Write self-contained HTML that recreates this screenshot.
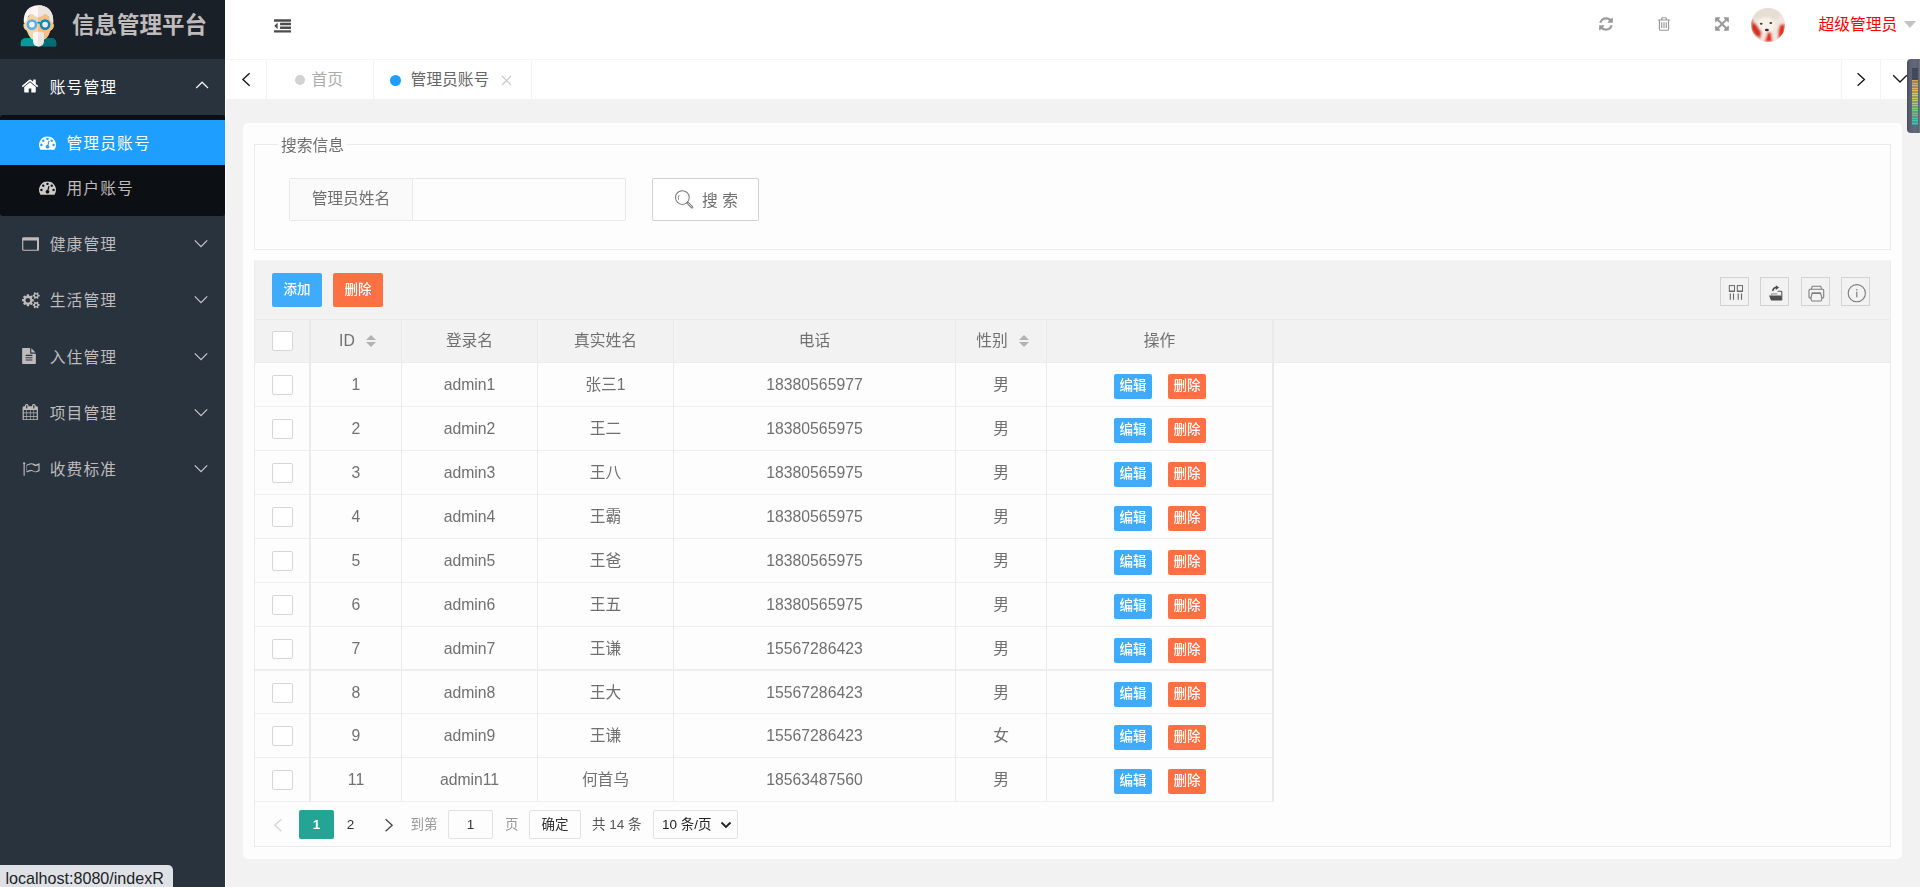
<!DOCTYPE html>
<html lang="zh-CN">
<head>
<meta charset="utf-8">
<title>信息管理平台</title>
<style>
*{box-sizing:border-box;margin:0;padding:0}
html,body{width:1920px;height:887px;overflow:hidden}
body{position:relative;background:#f2f2f2;font-family:"Liberation Sans","Noto Sans CJK SC",sans-serif;font-size:15.75px;color:#666}
svg{display:block}
/* ---------- sidebar ---------- */
#wl{position:absolute;left:225px;top:0;width:1px;height:887px;background:#fff}
#hl{position:absolute;left:226px;top:59px;width:1694px;height:1px;background:#f5f5f5}
#side{position:absolute;left:0;top:0;width:225px;height:887px;background:#28333e}
#logo{position:absolute;left:0;top:0;width:225px;height:58.5px;background:#192027}
#logo .t{position:absolute;left:72px;top:3px;height:46px;line-height:46px;font-size:22.5px;font-weight:bold;color:rgb(191,187,187);white-space:nowrap}
#logo svg{position:absolute}
.mi{position:absolute;left:0;width:225px;height:56.25px;line-height:56.25px;color:rgb(191,187,187);font-size:15.75px;letter-spacing:1.125px;white-space:nowrap}
.mi .tx{position:absolute;left:49.7px;top:1px}
.mi svg.ic{position:absolute}
.mi svg.ar{position:absolute;left:194px;top:23px}
#sub{position:absolute;left:0;top:115px;width:225px;height:101px;background:#0c0f13;border-radius:3px}
.si{position:absolute;left:0;width:225px;height:45px;line-height:45px;color:rgb(191,187,187);font-size:15.75px;letter-spacing:1.125px;white-space:nowrap}
.si .tx{position:absolute;left:66.5px;top:1px}
.si svg{position:absolute;left:39.1px;top:13.6px}
.si.on{background:#1e9fff;color:#fff}
/* ---------- header ---------- */
#hd{position:absolute;left:225px;top:0;width:1695px;height:59px;background:#fff}
#hd svg{position:absolute}
#hd .av{position:absolute;left:1526px;top:7.5px;width:34px;height:34px;border-radius:50%;overflow:hidden}
#hd .un{position:absolute;left:1593.5px;top:0;height:50px;line-height:50px;color:#f00;font-size:15.75px;white-space:nowrap}
#hd .tri{position:absolute;left:1679px;top:21px;width:0;height:0;border:6.5px solid transparent;border-top:7px solid #c2c2c2}
#tabs{position:absolute;left:226px;top:60px;width:1694px;height:39px;background:#fff}
#tabs .dv{position:absolute;top:0;width:1px;height:39px;background:#f3f3f3}
#tabs .dot{position:absolute;border-radius:50%}
#tabs .tt{position:absolute;top:0;height:39px;line-height:39px;white-space:nowrap;font-size:15.75px}
#tabs svg{position:absolute}
#meter{position:absolute;left:1907px;top:59px;width:13px;height:73.5px;background:linear-gradient(90deg,#474c5b 0,#5a6071 22%,#636979 60%,#5c6273 90%,#7c8190 100%);border-radius:4px 0 0 4px;overflow:hidden}
#meter i{position:absolute;left:5px;width:5.5px;height:1.3px}
/* ---------- content ---------- */
#fr{position:absolute;left:0;top:0;width:1920px;height:887px;will-change:transform}
#card{position:absolute;left:243px;top:123px;width:1659px;height:736px;background:#fdfdfd;border-radius:5px}
#fs{position:absolute;left:254px;top:144px;width:1637px;height:106px;border:1px solid #ebebeb}
#fs .lg{position:absolute;left:23px;top:-10px;height:22px;line-height:22px;padding:0 3px;background:#fdfdfd;font-size:15.75px;color:#707070;white-space:nowrap}
#ig{position:absolute;left:289px;top:178px;width:337px;height:43px;border:1px solid #e9e9e9;border-radius:2px}
#ig .lb{position:absolute;left:0;top:0;width:123px;height:41px;line-height:40px;background:#fafafa;border-right:1px solid #e9e9e9;text-align:center;white-space:nowrap;color:#707070}
#sbtn{position:absolute;left:652px;top:178px;width:107px;height:43px;border:1px solid #d0d0d0;border-radius:2px;background:#fff;color:#707070;line-height:41px;white-space:nowrap}
#sbtn svg{position:absolute;left:20.7px;top:10.3px}
#sbtn span{position:absolute;left:49px;top:1px}
#tb{position:absolute;left:254px;top:260px;width:1637px;height:587px;border:1px solid #ebebeb;border-top-color:#f6f6f6;background:#fdfdfd}
#tool{position:absolute;left:0;top:0;width:1635px;height:59px;background:#f2f2f2;border-bottom:1px solid #ebebeb}
#tool .b1,#tool .b2{position:absolute;top:12px;height:34px;line-height:33px;font-weight:500;width:50px;text-align:center;color:#fff;font-size:13.5px;border-radius:2px;white-space:nowrap}
#tool .b1{left:17px;background:#3eabfd}
#tool .b2{left:78px;background:#fd7044}
#tool .tk{position:absolute;top:16px;width:29px;height:29px;border:1px solid #d2d2d2}
#tool .tk svg{position:absolute;left:-1px;top:-0.5px}
#th{position:absolute;left:0;top:59px;width:1635px;height:43px;background:#f2f2f2;border-bottom:1px solid #ececec}
.hc{position:absolute;top:59px;height:42px;line-height:42px;text-align:center;color:#707070;white-space:nowrap}
.st{display:inline-block;position:relative;width:11.6px;height:14px;margin-left:11.5px;vertical-align:-2.7px}
.st b{position:absolute;left:0;width:0;height:0;border:5.8px solid transparent}
.st .u{top:-4.6px;border-bottom-color:#b2b2b2}
.st .d{top:7.5px;border-top-color:#b2b2b2}
.cb{position:absolute;width:21px;height:20px;border:1px solid #d6d6d6;border-radius:2px;background:#fff}
.tr{position:absolute;left:0;width:1017px;border-bottom:1px solid #efefef}
.tc{position:absolute;top:0;height:43px;line-height:43px;text-align:center;color:#707070;white-space:nowrap}
.e1,.e2{position:absolute;top:11px;height:25px;line-height:24px;font-weight:500;width:38px;text-align:center;color:#fff;font-size:13.5px;border-radius:2px;white-space:nowrap}
.e1{left:859px;background:#3eabfd}
.e2{left:913px;background:#fd7044}
.vl{position:absolute;top:59px;height:482px;background:#eaeaea}
#pg{position:absolute;left:0;top:541px;width:1635px;height:44px}
#pg>*{position:absolute}
#pg span{font-size:13.5px;white-space:nowrap;top:8px;height:29px;line-height:29px}
#pg .pv{left:18.3px;top:15.5px}
#pg .nx{left:128.6px;top:15.5px}
#pg .cur{left:44px;width:35px;background:#24a494;color:#fff;text-align:center;border-radius:2px;font-weight:bold}
#pg .p2{left:80px;width:31px;text-align:center;color:#333}
#pg .t1{left:155.5px;color:#999}
#pg .pin{left:193px;width:45px;border:1px solid #e2e2e2;border-radius:2px;text-align:center;color:#333;line-height:27px}
#pg .t2{left:250px;color:#999}
#pg .ok{left:274px;width:52px;border:1px solid #e2e2e2;border-radius:2px;text-align:center;color:#333;line-height:27px}
#pg .t3{left:337px;color:#555}
#pg .sel{left:398px;width:85px;border:1px solid #e2e2e2;border-radius:2px;color:#222;line-height:27px;padding-left:8px}
#pg .sel svg{position:absolute;left:66px;top:10px}
#status{position:absolute;left:0;top:865px;width:173px;height:22px;background:#dee1e6;border-top-right-radius:5px;color:#202124;font-size:16.1px;line-height:27.5px;padding-left:5.5px;white-space:nowrap;font-family:"Liberation Sans",sans-serif}
.hc.so{padding-left:5px}
</style>
</head>
<body>
<div id="side">
  <div id="logo">
    <svg style="left:14px;top:0" width="50" height="52" viewBox="14 0 50 52">
<clipPath id="rh"><rect x="38" y="0" width="30" height="52"/></clipPath>
<g id="lg1">
<path d="M20.7 46.3V43Q20.7 38.1 27 38.1H50Q56.2 38.1 56.2 43V46.3Z" fill="#009a9a"/>
<path d="M24.6 21.5V23.2Q23.3 23.4 23.4 25.6Q23.6 29.4 26.6 30.4L28.6 35Q31 39.6 35 40.6H42Q46 39.6 48.6 35L50.4 30.4Q53.6 29.4 53.7 25.6Q53.8 23.4 52.4 23.2V21.5L45 12H32Z" fill="#f3d5a6"/>
<path d="M23.9 23.4C22.6 11.5 29.5 5.3 38.4 5.3C47.5 5.3 54.4 11.5 53.1 23.4L50.4 21L48.6 16L45.1 13.7Q38.4 20.6 31.7 13.7L28.4 16L26.6 21Z" fill="#fef6f4"/>
<path d="M33 33.6Q33 31.8 36 31.8H41Q44 31.8 44 33.6V41Q44 46.4 38.5 46.4Q33 46.4 33 41Z" fill="#fef6f4"/>
<path d="M36.2 23.6Q38.5 21.4 40.8 23.6" fill="none" stroke="#5dade9" stroke-width="1.6"/>
<circle cx="31.9" cy="24.6" r="4.1" fill="#ecf5ff" stroke="#5dade9" stroke-width="2.5"/>
</g>
<g clip-path="url(#rh)">
<path d="M20.7 46.3V43Q20.7 38.1 27 38.1H50Q56.2 38.1 56.2 43V46.3Z" fill="#006c73"/>
<path d="M24.6 21.5V23.2Q23.3 23.4 23.4 25.6Q23.6 29.4 26.6 30.4L28.6 35Q31 39.6 35 40.6H42Q46 39.6 48.6 35L50.4 30.4Q53.6 29.4 53.7 25.6Q53.8 23.4 52.4 23.2V21.5L45 12H32Z" fill="#f5c083"/>
<path d="M23.9 23.4C22.6 11.5 29.5 5.3 38.4 5.3C47.5 5.3 54.4 11.5 53.1 23.4L50.4 21L48.6 16L45.1 13.7Q38.4 20.6 31.7 13.7L28.4 16L26.6 21Z" fill="#ece4e1"/>
<path d="M33 33.6Q33 31.8 36 31.8H41Q44 31.8 44 33.6V41Q44 46.4 38.5 46.4Q33 46.4 33 41Z" fill="#ece4e1"/>
<path d="M36.2 23.6Q38.5 21.4 40.8 23.6" fill="none" stroke="#0f8aae" stroke-width="1.6"/>
<circle cx="45.1" cy="24.6" r="4.1" fill="#dfefff" stroke="#0f8aae" stroke-width="2.5"/>
</g>
</svg>
    <span class="t">信息管理平台</span>
  </div>
  <div class="mi" style="top:58.5px;color:#fff">
    <svg class="ic" style="left:21px;top:76.5px;margin-top:-58.5px" width="18" height="18" viewBox="0 0 1792 1792"><path fill="#fff" d="M1472 992v480q0 26-19 45t-45 19h-384v-384h-256v384h-384q-26 0-45-19t-19-45v-480q0-1 .5-3t.5-3l575-474 575 474q1 2 1 6zm223-69l-62 74q-8 9-21 11h-3q-13 0-21-7l-692-577-692 577q-12 8-24 7-13-2-21-11l-62-74q-8-10-7-23.500t11-21.500l719-599q32-26 76-26t76 26l244 204v-195q0-14 9-23t23-9h192q14 0 23 9t9 23v408l219 182q10 8 11 21.500t-7 23.500z"/></svg>
    <span class="tx">账号管理</span>
    <svg class="ar" style="left:194px;top:21.5px" width="16" height="10" viewBox="0 0 16 10"><path d="M2.2 8 L8.1 2.2 L14 8" fill="none" stroke="#f0f0f0" stroke-width="1.25"/></svg>
  </div>
  <div id="sub">
    <div class="si on" style="top:5px">
      <svg width="17" height="17" viewBox="0 0 1792 1792"><path fill="#fff" d="M384 1152q0-53-37.500-90.500t-90.500-37.500-90.500 37.500-37.500 90.500 37.500 90.500 90.500 37.500 90.500-37.500 37.500-90.500zm192-448q0-53-37.500-90.500t-90.500-37.500-90.500 37.500-37.500 90.500 37.500 90.500 90.500 37.500 90.500-37.500 37.500-90.500zm428 481l101-382q6-26-7.500-48.500t-38.500-29.500-48 6.500-30 39.500l-101 382q-60 5-107 43.500t-63 98.500q-20 77 20 146t117 89 146-20 89-117q16-60-6-117t-72-91zm660-33q0-53-37.500-90.500t-90.500-37.500-90.500 37.500-37.500 90.500 37.500 90.500 90.500 37.500 90.500-37.500 37.500-90.500zm-640-640q0-53-37.500-90.500t-90.500-37.500-90.500 37.500-37.500 90.500 37.500 90.500 90.500 37.500 90.500-37.500 37.500-90.500zm448 192q0-53-37.500-90.500t-90.500-37.500-90.500 37.500-37.500 90.500 37.500 90.500 90.500 37.500 90.500-37.500 37.500-90.500zm320 448q0 261-141 483-19 29-54 29h-1402q-35 0-54-29-141-221-141-483 0-182 71-348t191-286 286-191 348-71 348 71 286 191 191 286 71 348z"/></svg>
      <span class="tx">管理员账号</span>
    </div>
    <div class="si" style="top:50px">
      <svg width="17" height="17" viewBox="0 0 1792 1792"><path fill="#cdc9c9" d="M384 1152q0-53-37.500-90.500t-90.500-37.500-90.500 37.500-37.500 90.500 37.500 90.500 90.500 37.500 90.500-37.500 37.500-90.500zm192-448q0-53-37.500-90.500t-90.500-37.500-90.500 37.500-37.500 90.500 37.500 90.500 90.500 37.500 90.500-37.500 37.500-90.500zm428 481l101-382q6-26-7.500-48.500t-38.500-29.500-48 6.500-30 39.500l-101 382q-60 5-107 43.500t-63 98.500q-20 77 20 146t117 89 146-20 89-117q16-60-6-117t-72-91zm660-33q0-53-37.500-90.500t-90.500-37.500-90.500 37.500-37.500 90.500 37.500 90.500 90.500 37.500 90.500-37.500 37.500-90.500zm-640-640q0-53-37.500-90.500t-90.500-37.500-90.500 37.500-37.500 90.500 37.500 90.500 90.500 37.500 90.500-37.500 37.500-90.500zm448 192q0-53-37.500-90.500t-90.500-37.500-90.500 37.500-37.500 90.500 37.500 90.500 90.500 37.500 90.500-37.500 37.500-90.500zm320 448q0 261-141 483-19 29-54 29h-1402q-35 0-54-29-141-221-141-483 0-182 71-348t191-286 286-191 348-71 348 71 286 191 191 286 71 348z"/></svg>
      <span class="tx">用户账号</span>
    </div>
  </div>
  <div class="mi" style="top:216px">
    <svg class="ic" style="left:21px;top:19.9px" width="18.29" height="16" viewBox="0 0 2048 1792"><path fill="#bfbbbb" d="M256 1536h1536v-1024h-1536v1024zm1792-1248v1216q0 66-47 113t-113 47h-1600q-66 0-113-47t-47-113v-1216q0-66 47-113t113-47h1600q66 0 113 47t47 113z"/></svg>
    <span class="tx">健康管理</span>
    <svg class="ar" style="left:192.6px;top:22px" width="16" height="10" viewBox="0 0 16 10"><path d="M1.8 2.4 L8 8.6 L14.2 2.4" fill="none" stroke="#c8c5c5" stroke-width="1.25"/></svg>
  </div>
  <div class="mi" style="top:272.25px">
    <svg class="ic" style="left:22.1px;top:19.8px" width="17.68" height="16.5" viewBox="0 0 1920 1792"><path fill="#bfbbbb" d="M896 896q0-106-75-181t-181-75-181 75-75 181 75 181 181 75 181-75 75-181zm768 512q0-52-38-90t-90-38-90 38-38 90q0 53 37.500 90.500t90.500 37.500 90.500-37.500 37.500-90.500zm0-1024q0-52-38-90t-90-38-90 38-38 90q0 53 37.500 90.500t90.500 37.500 90.500-37.500 37.500-90.500zm-384 421v185q0 10-7 19.500t-16 10.500l-155 24q-11 35-32 76 34 48 90 115 7 11 7 20 0 12-7 19-23 30-82.500 89.500t-78.500 59.500q-11 0-21-7l-115-90q-37 19-77 31-11 108-23 155-7 24-30 24h-186q-11 0-20-7.500t-10-17.500l-23-153q-34-10-75-31l-118 89q-7 7-20 7-11 0-21-8-144-133-144-160 0-9 7-19 10-14 41-53t47-61q-23-44-35-82l-152-24q-10-1-17-9.500t-7-19.500v-185q0-10 7-19.500t16-10.500l155-24q11-35 32-76-34-48-90-115-7-11-7-20 0-12 7-20 22-30 82-89t79-59q11 0 21 7l115 90q34-18 77-32 11-108 23-154 7-24 30-24h186q11 0 20 7.500t10 17.500l23 153q34 10 75 31l118-89q8-7 20-7 11 0 21 8 144 133 144 160 0 8-7 19-12 16-42 54t-45 60q23 48 34 82l152 23q10 2 17 10.500t7 19.500zm640 533v140q0 16-149 31-12 27-30 52 51 113 51 138 0 4-4 7-122 71-124 71-8 0-46-47t-52-68q-20 2-30 2t-30-2q-14 21-52 68t-46 47q-2 0-124-71-4-3-4-7 0-25 51-138-18-25-30-52-149-15-149-31v-140q0-16 149-31 13-29 30-52-51-113-51-138 0-4 4-7 4-2 35-20t59-34 30-16q8 0 46 46.500t52 67.500q20-2 30-2t30 2q51-71 92-112l6-2q4 0 124 70 4 3 4 7 0 25-51 138 17 23 30 52 149 15 149 31zm0-1024v140q0 16-149 31-12 27-30 52 51 113 51 138 0 4-4 7-122 71-124 71-8 0-46-47t-52-68q-20 2-30 2t-30-2q-14 21-52 68t-46 47q-2 0-124-71-4-3-4-7 0-25 51-138-18-25-30-52-149-15-149-31v-140q0-16 149-31 13-29 30-52-51-113-51-138 0-4 4-7 4-2 35-20t59-34 30-16q8 0 46 46.500t52 67.500q20-2 30-2t30 2q51-71 92-112l6-2q4 0 124 70 4 3 4 7 0 25-51 138 17 23 30 52 149 15 149 31z"/></svg>
    <span class="tx">生活管理</span>
    <svg class="ar" style="left:192.6px;top:22px" width="16" height="10" viewBox="0 0 16 10"><path d="M1.8 2.4 L8 8.6 L14.2 2.4" fill="none" stroke="#c8c5c5" stroke-width="1.25"/></svg>
  </div>
  <div class="mi" style="top:328.5px">
    <svg class="ic" style="left:21px;top:19.8px" width="16" height="16" viewBox="0 0 1792 1792"><path fill="#bfbbbb" d="M1596 476q14 14 28 36h-472v-472q22 14 36 28zm-476 164h544v1056q0 40-28 68t-68 28h-1344q-40 0-68-28t-28-68v-1600q0-40 28-68t68-28h800v544q0 40 28 68t68 28zm160 736v-64q0-14-9-23t-23-9h-704q-14 0-23 9t-9 23v64q0 14 9 23t23 9h704q14 0 23-9t9-23zm0-256v-64q0-14-9-23t-23-9h-704q-14 0-23 9t-9 23v64q0 14 9 23t23 9h704q14 0 23-9t9-23zm0-256v-64q0-14-9-23t-23-9h-704q-14 0-23 9t-9 23v64q0 14 9 23t23 9h704q14 0 23-9t9-23z"/></svg>
    <span class="tx">入住管理</span>
    <svg class="ar" style="left:192.6px;top:22px" width="16" height="10" viewBox="0 0 16 10"><path d="M1.8 2.4 L8 8.6 L14.2 2.4" fill="none" stroke="#c8c5c5" stroke-width="1.25"/></svg>
  </div>
  <div class="mi" style="top:384.75px">
    <svg class="ic" style="left:21.5px;top:19.15px" width="16.5" height="16.5" viewBox="0 0 1792 1792"><path fill="#bfbbbb" d="M192 1664h288v-288h-288v288zm352 0h320v-288h-320v288zm-352-352h288v-320h-288v320zm352 0h320v-320h-320v320zm-352-384h288v-288h-288v288zm736 736h320v-288h-320v288zm-384-736h320v-288h-320v288zm768 736h288v-288h-288v288zm-384-352h320v-320h-320v320zm-352-864v-288q0-13-9.500-22.500t-22.500-9.500h-64q-13 0-22.500 9.500t-9.500 22.500v288q0 13 9.500 22.500t22.500 9.500h64q13 0 22.500-9.500t9.500-22.500zm736 864h288v-320h-288v320zm-384-384h320v-288h-320v288zm384 0h288v-288h-288v288zm32-480v-288q0-13-9.500-22.500t-22.500-9.500h-64q-13 0-22.500 9.500t-9.500 22.500v288q0 13 9.500 22.500t22.500 9.500h64q13 0 22.500-9.500t9.500-22.500zm384-64v1280q0 52-38 90t-90 38h-1408q-52 0-90-38t-38-90v-1280q0-52 38-90t90-38h128v-96q0-66 47-113t113-47h64q66 0 113 47t47 113v96h384v-96q0-66 47-113t113-47h64q66 0 113 47t47 113v96h128q52 0 90 38t38 90z"/></svg>
    <span class="tx">项目管理</span>
    <svg class="ar" style="left:192.6px;top:22px" width="16" height="10" viewBox="0 0 16 10"><path d="M1.8 2.4 L8 8.6 L14.2 2.4" fill="none" stroke="#c8c5c5" stroke-width="1.25"/></svg>
  </div>
  <div class="mi" style="top:441px">
    <svg class="ic" style="left:23.1px;top:19.96px" width="16.57" height="16" viewBox="0 0 1856 1792"><path fill="#bfbbbb" d="M1728 1099v-622q-165 89-299 89-80 0-141.500-31.500t-115.500-70.500-114-70.500-143-31.500q-221 0-481 183v597q237-146 439-146 58 0 113 16.500t91 36.500 84 49q20 13 33 20.500t42 22.500 56 21 61 6q58 0 135-28t133.500-59.500 106.500-61.500zm-1472-843q0 35-17.500 64t-46.500 46v1266q0 14-9 23t-23 9h-64q-14 0-23-9t-9-23v-1266q-29-17-46.500-46t-17.500-64q0-53 37.500-90.500t90.500-37.500 90.500 37.500 37.500 90.500zm1600 64v763q0 39-35 57-10 5-17 9-218 116-369 116-88 0-158-35l-28-14q-64-33-99-48t-91-29-114-14q-102 0-235.500 44t-228.500 102q-15 9-33 9-16 0-32-8-32-19-32-56v-742q0-35 31-55 35-21 78.500-42.500t114-52 152.500-49.500 155-19q112 0 209 31t209 86q38 19 89 19 122 0 310-112 22-12 31-17 31-16 62 2 31 20 31 55z"/></svg>
    <span class="tx">收费标准</span>
    <svg class="ar" style="left:192.6px;top:22px" width="16" height="10" viewBox="0 0 16 10"><path d="M1.8 2.4 L8 8.6 L14.2 2.4" fill="none" stroke="#c8c5c5" stroke-width="1.25"/></svg>
  </div>
</div>
<div id="wl"></div><div id="hl"></div>
<div id="hd">
  <svg style="left:49px;top:17.6px" width="17" height="17" viewBox="0 0 1792 1792"><path fill="#4d4d4d" d="M384 544v576q0 13-9.500 22.500t-22.500 9.500q-14 0-23-9l-288-288q-9-9-9-23t9-23l288-288q9-9 23-9 13 0 22.500 9.500t9.500 22.500zm1408 768v192q0 13-9.500 22.500t-22.500 9.500h-1728q-13 0-22.500-9.500t-9.500-22.500v-192q0-13 9.500-22.500t22.500-9.500h1728q13 0 22.500 9.500t9.500 22.500zm0-384v192q0 13-9.500 22.500t-22.500 9.500h-1088q-13 0-22.500-9.500t-9.500-22.500v-192q0-13 9.500-22.500t22.500-9.500h1088q13 0 22.500 9.500t9.500 22.500zm0-384v192q0 13-9.500 22.500t-22.500 9.500h-1088q-13 0-22.500-9.500t-9.500-22.500v-192q0-13 9.500-22.500t22.500-9.500h1088q13 0 22.500 9.500t9.500 22.500zm0-384v192q0 13-9.500 22.500t-22.500 9.500h-1728q-13 0-22.500-9.500t-9.500-22.500v-192q0-13 9.500-22.500t22.500-9.500h1728q13 0 22.500 9.500t9.500 22.500z"/></svg>
  <svg style="left:1373.2px;top:16px" width="16" height="16" viewBox="0 0 1792 1792"><path fill="#999" d="M1639 1056q0 5-1 7-64 268-268 434.500t-478 166.500q-146 0-282.500-55t-243.500-157l-129 129q-19 19-45 19t-45-19-19-45v-448q0-26 19-45t45-19h448q26 0 45 19t19 45-19 45l-137 137q71 66 161 102t187 36q134 0 250-65t186-179q11-17 53-117 8-23 30-23h192q13 0 22.500 9.500t9.500 22.500zm25-800v448q0 26-19 45t-45 19h-448q-26 0-45-19t-19-45 19-45l138-138q-148-137-349-137-134 0-250 65t-186 179q-11 17-53 117-8 23-30 23h-199q-13 0-22.500-9.500t-9.500-22.500v-7q65-268 270-434.500t480-166.500q146 0 284 55.500t245 156.500l130-129q19-19 45-19t45 19 19 45z"/></svg>
  <svg style="left:1431.4px;top:16.1px" width="16" height="16" viewBox="0 0 1792 1792"><path fill="#999" d="M704 736v576q0 14-9 23t-23 9h-64q-14 0-23-9t-9-23v-576q0-14 9-23t23-9h64q14 0 23 9t9 23zm256 0v576q0 14-9 23t-23 9h-64q-14 0-23-9t-9-23v-576q0-14 9-23t23-9h64q14 0 23 9t9 23zm256 0v576q0 14-9 23t-23 9h-64q-14 0-23-9t-9-23v-576q0-14 9-23t23-9h64q14 0 23 9t9 23zm128 724v-948h-896v948q0 22 7 40.500t14.500 27 10.500 8.500h832q3 0 10.500-8.500t14.500-27 7-40.500zm-672-1076h448l-48-117q-7-9-17-11h-317q-10 2-17 11zm928 32v64q0 14-9 23t-23 9h-96v948q0 83-47 143.500t-113 60.500h-832q-66 0-113-58.500t-47-141.500v-952h-96q-14 0-23-9t-9-23v-64q0-14 9-23t23-9h309l70-167q15-37 54-63t79-26h320q40 0 79 26t54 63l70 167h309q14 0 23 9t9 23z"/></svg>
  <svg style="left:1489px;top:16.1px" width="16" height="16" viewBox="0 0 1792 1792"><path fill="#999" d="M1411 541l-355 355 355 355 144-144q29-31 70-14 39 17 39 59v448q0 26-19 45t-45 19h-448q-42 0-59-40-17-39 14-69l144-144-355-355-355 355 144 144q31 30 14 69-17 40-59 40h-448q-26 0-45-19t-19-45v-448q0-42 40-59 39-17 69 14l144 144 355-355-355-355-144 144q-19 19-45 19-12 0-24-5-40-17-40-59v-448q0-26 19-45t45-19h448q42 0 59 40 17 39-14 69l-144 144 355 355 355-355-144-144q-31-30-14-69 17-40 59-40h448q26 0 45 19t19 45v448q0 42-39 59-13 5-25 5-26 0-45-19z"/></svg>
  <div class="av"><svg width="34" height="34" viewBox="0 0 34 34"><filter id="bl" x="-10%" y="-10%" width="120%" height="120%"><feGaussianBlur stdDeviation="0.8"/></filter><filter id="bl2" x="-30%" y="-30%" width="160%" height="160%"><feGaussianBlur stdDeviation="0.4"/></filter><rect width="34" height="34" fill="#efe7de"/><g filter="url(#bl)"><rect x="-3" y="-3" width="40" height="40" fill="#efe7de"/>
<ellipse cx="16" cy="6" rx="14" ry="7" fill="#e6ded4"/>
<ellipse cx="15" cy="17" rx="9" ry="8" fill="#f6f1ea"/>
<path d="M0 10L2.2 12L3 16L0 19Z" fill="#c27a2c"/>
<path d="M0.5 15.5L4.6 15.2L10.6 24.2L9.4 30.5L3.5 27L0 21Z" fill="#d2301f"/>
<path d="M29 16.8L34 15.8V27L26.8 31L27.4 22Z" fill="#e23322"/>
<path d="M13.5 34L16.8 24.2L20 24.6L21.5 34Z" fill="#e8341f"/>
<path d="M17.6 24.5L19.2 24.8L19 30L17.8 30Z" fill="#c4261c"/>
</g><g filter="url(#bl2)"><ellipse cx="10.2" cy="15.7" rx="1.4" ry="1" fill="#4a3a2e"/>
<ellipse cx="19.8" cy="14.9" rx="1.4" ry="1" fill="#4a3a2e"/>
<ellipse cx="15.9" cy="22" rx="2" ry="1.3" fill="#35272a"/>
</g></svg></div>
  <span class="un">超级管理员</span>
  <i class="tri"></i>
</div>
<div id="tabs">
  <svg style="left:14px;top:11px" width="12" height="17" viewBox="0 0 12 17"><path d="M9.6 2.2 L2.9 8.5 L9.6 14.8" fill="none" stroke="#1a1a1a" stroke-width="1.4"/></svg>
  <i class="dv" style="left:40px"></i>
  <i class="dot" style="left:69px;top:15px;width:10px;height:10px;background:#d2d2d2"></i>
  <span class="tt" style="left:85.4px;color:#acacac">首页</span>
  <i class="dv" style="left:147px"></i>
  <i class="dot" style="left:164px;top:14.5px;width:11px;height:11px;background:#1e9fff"></i>
  <span class="tt" style="left:184.5px;color:#666">管理员账号</span>
  <svg style="left:275px;top:15px" width="11" height="11" viewBox="0 0 11 11"><path d="M1 1 L10 10 M10 1 L1 10" fill="none" stroke="#c6c6c6" stroke-width="1.1"/></svg>
  <i class="dv" style="left:304.5px"></i>
  <i class="dv" style="left:1614.5px"></i>
  <svg style="left:1630px;top:12px" width="10" height="15" viewBox="0 0 10 15"><path d="M1.6 1.2 L8.4 7.5 L1.6 13.8" fill="none" stroke="#1a1a1a" stroke-width="1.4"/></svg>
  <i class="dv" style="left:1654px"></i>
  <svg style="left:1666px;top:13.5px" width="16" height="10" viewBox="0 0 16 10"><path d="M1.2 1.2 L8 8 L14.8 1.2" fill="none" stroke="#1a1a1a" stroke-width="1.4"/></svg>
</div>
<div id="meter"><i style="top:8.6px;background:rgb(62, 68, 84)"></i><i style="top:9.8px;background:rgb(70, 76, 92)"></i><i style="top:11.1px;background:rgb(62, 68, 84)"></i><i style="top:12.3px;background:rgb(70, 76, 92)"></i><i style="top:13.6px;background:rgb(62, 68, 84)"></i><i style="top:14.8px;background:rgb(70, 76, 92)"></i><i style="top:16.1px;background:rgb(62, 68, 84)"></i><i style="top:17.3px;background:rgb(70, 76, 92)"></i><i style="top:18.6px;background:rgb(62, 68, 84)"></i><i style="top:19.8px;background:rgb(70, 76, 92)"></i><i style="top:21.1px;background:rgb(226, 160, 84)"></i><i style="top:22.3px;background:rgb(165, 131, 97)"></i><i style="top:23.6px;background:rgb(225, 168, 83)"></i><i style="top:24.8px;background:rgb(164, 136, 96)"></i><i style="top:26.1px;background:rgb(224, 176, 82)"></i><i style="top:27.3px;background:rgb(164, 140, 96)"></i><i style="top:28.6px;background:rgb(224, 184, 82)"></i><i style="top:29.8px;background:rgb(164, 144, 96)"></i><i style="top:31.1px;background:rgb(223, 191, 81)"></i><i style="top:32.3px;background:rgb(163, 148, 95)"></i><i style="top:33.6px;background:rgb(222, 199, 80)"></i><i style="top:34.8px;background:rgb(163, 153, 95)"></i><i style="top:36.1px;background:rgb(209, 202, 84)"></i><i style="top:37.3px;background:rgb(155, 154, 97)"></i><i style="top:38.6px;background:rgb(194, 204, 89)"></i><i style="top:39.8px;background:rgb(147, 155, 100)"></i><i style="top:41.1px;background:rgb(180, 207, 94)"></i><i style="top:42.3px;background:rgb(140, 157, 103)"></i><i style="top:43.6px;background:rgb(165, 209, 98)"></i><i style="top:44.8px;background:rgb(131, 158, 105)"></i><i style="top:46.1px;background:rgb(149, 208, 106)"></i><i style="top:47.3px;background:rgb(122, 158, 109)"></i><i style="top:48.6px;background:rgb(133, 206, 116)"></i><i style="top:49.8px;background:rgb(114, 156, 115)"></i><i style="top:51.1px;background:rgb(116, 204, 125)"></i><i style="top:52.3px;background:rgb(104, 155, 120)"></i><i style="top:53.6px;background:rgb(100, 201, 134)"></i><i style="top:54.8px;background:rgb(96, 154, 125)"></i><i style="top:56.1px;background:rgb(85, 200, 145)"></i><i style="top:57.3px;background:rgb(87, 153, 131)"></i><i style="top:58.6px;background:rgb(73, 202, 158)"></i><i style="top:59.8px;background:rgb(81, 154, 138)"></i><i style="top:61.1px;background:rgb(60, 203, 171)"></i><i style="top:62.3px;background:rgb(74, 155, 145)"></i><i style="top:63.6px;background:rgb(48, 204, 184)"></i><i style="top:64.8px;background:rgb(67, 155, 152)"></i></div>
<div id="fr">
<div id="card"></div>
<div id="fs"><span class="lg">搜索信息</span></div>
<div id="ig"><span class="lb">管理员姓名</span><span class="inp"></span></div>
<div id="sbtn"><svg width="20.5" height="20.5" viewBox="0 0 21.8 21.8"><circle cx="8.9" cy="9.1" r="7.3" fill="none" stroke="#777" stroke-width="1.1"/><path d="M5 11.3 A4.4 4.4 0 0 1 5.5 6.6" fill="none" stroke="#777" stroke-width="1"/><path d="M14.6 14.8 L19.2 19.4" stroke="#777" stroke-width="2.7" stroke-linecap="round"/><path d="M14.9 15.1 L19.1 19.3" stroke="#fdfdfd" stroke-width="0.9" stroke-linecap="round"/></svg><span>搜 索</span></div>
<div id="tb">
<div id="tool"><span class="b1">添加</span><span class="b2">删除</span><span class="tk" style="left:1465px"><svg width="29" height="29" viewBox="0 0 29 29"><g fill="none" stroke="#666" stroke-width="1"><rect x="9.3" y="7.6" width="5.2" height="5.6"/><rect x="17.3" y="7.6" width="5.2" height="5.6"/><path d="M9 13.4H14.8M17 13.4H22.8" stroke-width="1.4"/><path d="M10.3 15.6V21.8M13.5 15.6V21.8M18.2 15.6V21.8M21.5 15.6V21.8" stroke-width="1.1"/></g></svg></span><span class="tk" style="left:1505px"><svg width="29" height="29" viewBox="0 0 29 29"><path d="M9 17.6H21.6L22 22.4H11Z" fill="#4d4d4d"/><path d="M21.8 22V14Q21.8 13.2 21 13.2H17.6" fill="none" stroke="#5a5a5a" stroke-width="1.1"/><path d="M11.6 17.4V15.9H17.4" fill="none" stroke="#8a8a8a" stroke-width="1"/><path d="M12.8 13Q12.9 9.8 16.2 9.6" fill="none" stroke="#4d4d4d" stroke-width="1.5"/><path d="M15.8 7.2L19.2 9.6L15.8 12Z" fill="#4d4d4d"/></svg></span><span class="tk" style="left:1546px"><svg width="29" height="29" viewBox="0 0 29 29"><g fill="none" stroke="#7d7d7d" stroke-width="1.1"><path d="M10.4 11.2L11.3 8.2H19.7L20.6 11.2"/><path d="M10.3 20H8.9Q8 20 8 19V12.3Q8 11.3 9 11.3H21.7Q22.7 11.3 22.7 12.3V19Q22.7 20 21.8 20H20.4"/><path d="M11.2 15.4H19.6L20.8 19.4Q21 23 19.4 23H11.4Q9.8 23 10 19.4Z"/><path d="M10.8 15.2H20" stroke-width="1.6"/></g></svg></span><span class="tk" style="left:1586px"><svg width="29" height="29" viewBox="0 0 29 29"><circle cx="15.8" cy="15.2" r="8.6" fill="none" stroke="#7d7d7d" stroke-width="1.1"/><rect x="15.2" y="11" width="1.2" height="1.4" fill="#7d7d7d"/><rect x="15.2" y="13.6" width="1.2" height="5.7" fill="#7d7d7d"/></svg></span></div>
<div id="th"></div>
<i class="cb" style="left:17px;top:70px"></i><div class="hc so" style="left:56px;width:90px">ID<i class="st"><b class="u"></b><b class="d"></b></i></div><div class="hc" style="left:147px;width:135px">登录名</div><div class="hc" style="left:283px;width:135px">真实姓名</div><div class="hc" style="left:419px;width:281px">电话</div><div class="hc so" style="left:701px;width:90px">性别<i class="st"><b class="u"></b><b class="d"></b></i></div><div class="hc" style="left:792px;width:225px">操作</div>
<div class="tr" style="top:102px;height:44px"><i class="cb" style="left:17px;top:12px"></i><div class="tc" style="left:56px;width:90px">1</div><div class="tc" style="left:147px;width:135px">admin1</div><div class="tc" style="left:283px;width:135px">张三1</div><div class="tc" style="left:419px;width:281px">18380565977</div><div class="tc" style="left:701px;width:90px">男</div><span class="e1">编辑</span><span class="e2">删除</span></div>
<div class="tr" style="top:146px;height:44px"><i class="cb" style="left:17px;top:12px"></i><div class="tc" style="left:56px;width:90px">2</div><div class="tc" style="left:147px;width:135px">admin2</div><div class="tc" style="left:283px;width:135px">王二</div><div class="tc" style="left:419px;width:281px">18380565975</div><div class="tc" style="left:701px;width:90px">男</div><span class="e1">编辑</span><span class="e2">删除</span></div>
<div class="tr" style="top:190px;height:44px"><i class="cb" style="left:17px;top:12px"></i><div class="tc" style="left:56px;width:90px">3</div><div class="tc" style="left:147px;width:135px">admin3</div><div class="tc" style="left:283px;width:135px">王八</div><div class="tc" style="left:419px;width:281px">18380565975</div><div class="tc" style="left:701px;width:90px">男</div><span class="e1">编辑</span><span class="e2">删除</span></div>
<div class="tr" style="top:234px;height:44px"><i class="cb" style="left:17px;top:12px"></i><div class="tc" style="left:56px;width:90px">4</div><div class="tc" style="left:147px;width:135px">admin4</div><div class="tc" style="left:283px;width:135px">王霸</div><div class="tc" style="left:419px;width:281px">18380565975</div><div class="tc" style="left:701px;width:90px">男</div><span class="e1">编辑</span><span class="e2">删除</span></div>
<div class="tr" style="top:278px;height:44px"><i class="cb" style="left:17px;top:12px"></i><div class="tc" style="left:56px;width:90px">5</div><div class="tc" style="left:147px;width:135px">admin5</div><div class="tc" style="left:283px;width:135px">王爸</div><div class="tc" style="left:419px;width:281px">18380565975</div><div class="tc" style="left:701px;width:90px">男</div><span class="e1">编辑</span><span class="e2">删除</span></div>
<div class="tr" style="top:322px;height:44px"><i class="cb" style="left:17px;top:12px"></i><div class="tc" style="left:56px;width:90px">6</div><div class="tc" style="left:147px;width:135px">admin6</div><div class="tc" style="left:283px;width:135px">王五</div><div class="tc" style="left:419px;width:281px">18380565975</div><div class="tc" style="left:701px;width:90px">男</div><span class="e1">编辑</span><span class="e2">删除</span></div>
<div class="tr" style="top:366px;height:44px;border-bottom-width:2px"><i class="cb" style="left:17px;top:12px"></i><div class="tc" style="left:56px;width:90px">7</div><div class="tc" style="left:147px;width:135px">admin7</div><div class="tc" style="left:283px;width:135px">王谦</div><div class="tc" style="left:419px;width:281px">15567286423</div><div class="tc" style="left:701px;width:90px">男</div><span class="e1">编辑</span><span class="e2">删除</span></div>
<div class="tr" style="top:410px;height:43px"><i class="cb" style="left:17px;top:12px"></i><div class="tc" style="left:56px;width:90px">8</div><div class="tc" style="left:147px;width:135px">admin8</div><div class="tc" style="left:283px;width:135px">王大</div><div class="tc" style="left:419px;width:281px">15567286423</div><div class="tc" style="left:701px;width:90px">男</div><span class="e1">编辑</span><span class="e2">删除</span></div>
<div class="tr" style="top:453px;height:44px"><i class="cb" style="left:17px;top:12px"></i><div class="tc" style="left:56px;width:90px">9</div><div class="tc" style="left:147px;width:135px">admin9</div><div class="tc" style="left:283px;width:135px">王谦</div><div class="tc" style="left:419px;width:281px">15567286423</div><div class="tc" style="left:701px;width:90px">女</div><span class="e1">编辑</span><span class="e2">删除</span></div>
<div class="tr" style="top:497px;height:44px"><i class="cb" style="left:17px;top:12px"></i><div class="tc" style="left:56px;width:90px">11</div><div class="tc" style="left:147px;width:135px">admin11</div><div class="tc" style="left:283px;width:135px">何首乌</div><div class="tc" style="left:419px;width:281px">18563487560</div><div class="tc" style="left:701px;width:90px">男</div><span class="e1">编辑</span><span class="e2">删除</span></div>
<i class="vl" style="left:54px;width:2px"></i><i class="vl" style="left:146px;width:1px"></i><i class="vl" style="left:282px;width:1px"></i><i class="vl" style="left:418px;width:1px"></i><i class="vl" style="left:700px;width:1px"></i><i class="vl" style="left:791px;width:1px"></i><i class="vl" style="left:1017px;width:2px"></i>
<div id="pg"><svg class="pv" width="10" height="15" viewBox="0 0 10 15"><path d="M8.4 1.3 L1.8 7.3 L8.4 13.3" fill="none" stroke="#d2d2d2" stroke-width="1.3"/></svg><span class="cur">1</span><span class="p2">2</span><svg class="nx" width="10" height="15" viewBox="0 0 10 15"><path d="M1.6 1.3 L8.2 7.3 L1.6 13.3" fill="none" stroke="#444" stroke-width="1.3"/></svg><span class="t1">到第</span><span class="pin">1</span><span class="t2">页</span><span class="ok">确定</span><span class="t3">共 14 条</span><span class="sel">10 条/页<svg width="12" height="8" viewBox="0 0 12 8"><path d="M1.5 1.5 L6 6 L10.5 1.5" fill="none" stroke="#222" stroke-width="1.9"/></svg></span></div>
</div>
</div>
<div id="status">localhost:8080/indexR</div>
</body>
</html>
